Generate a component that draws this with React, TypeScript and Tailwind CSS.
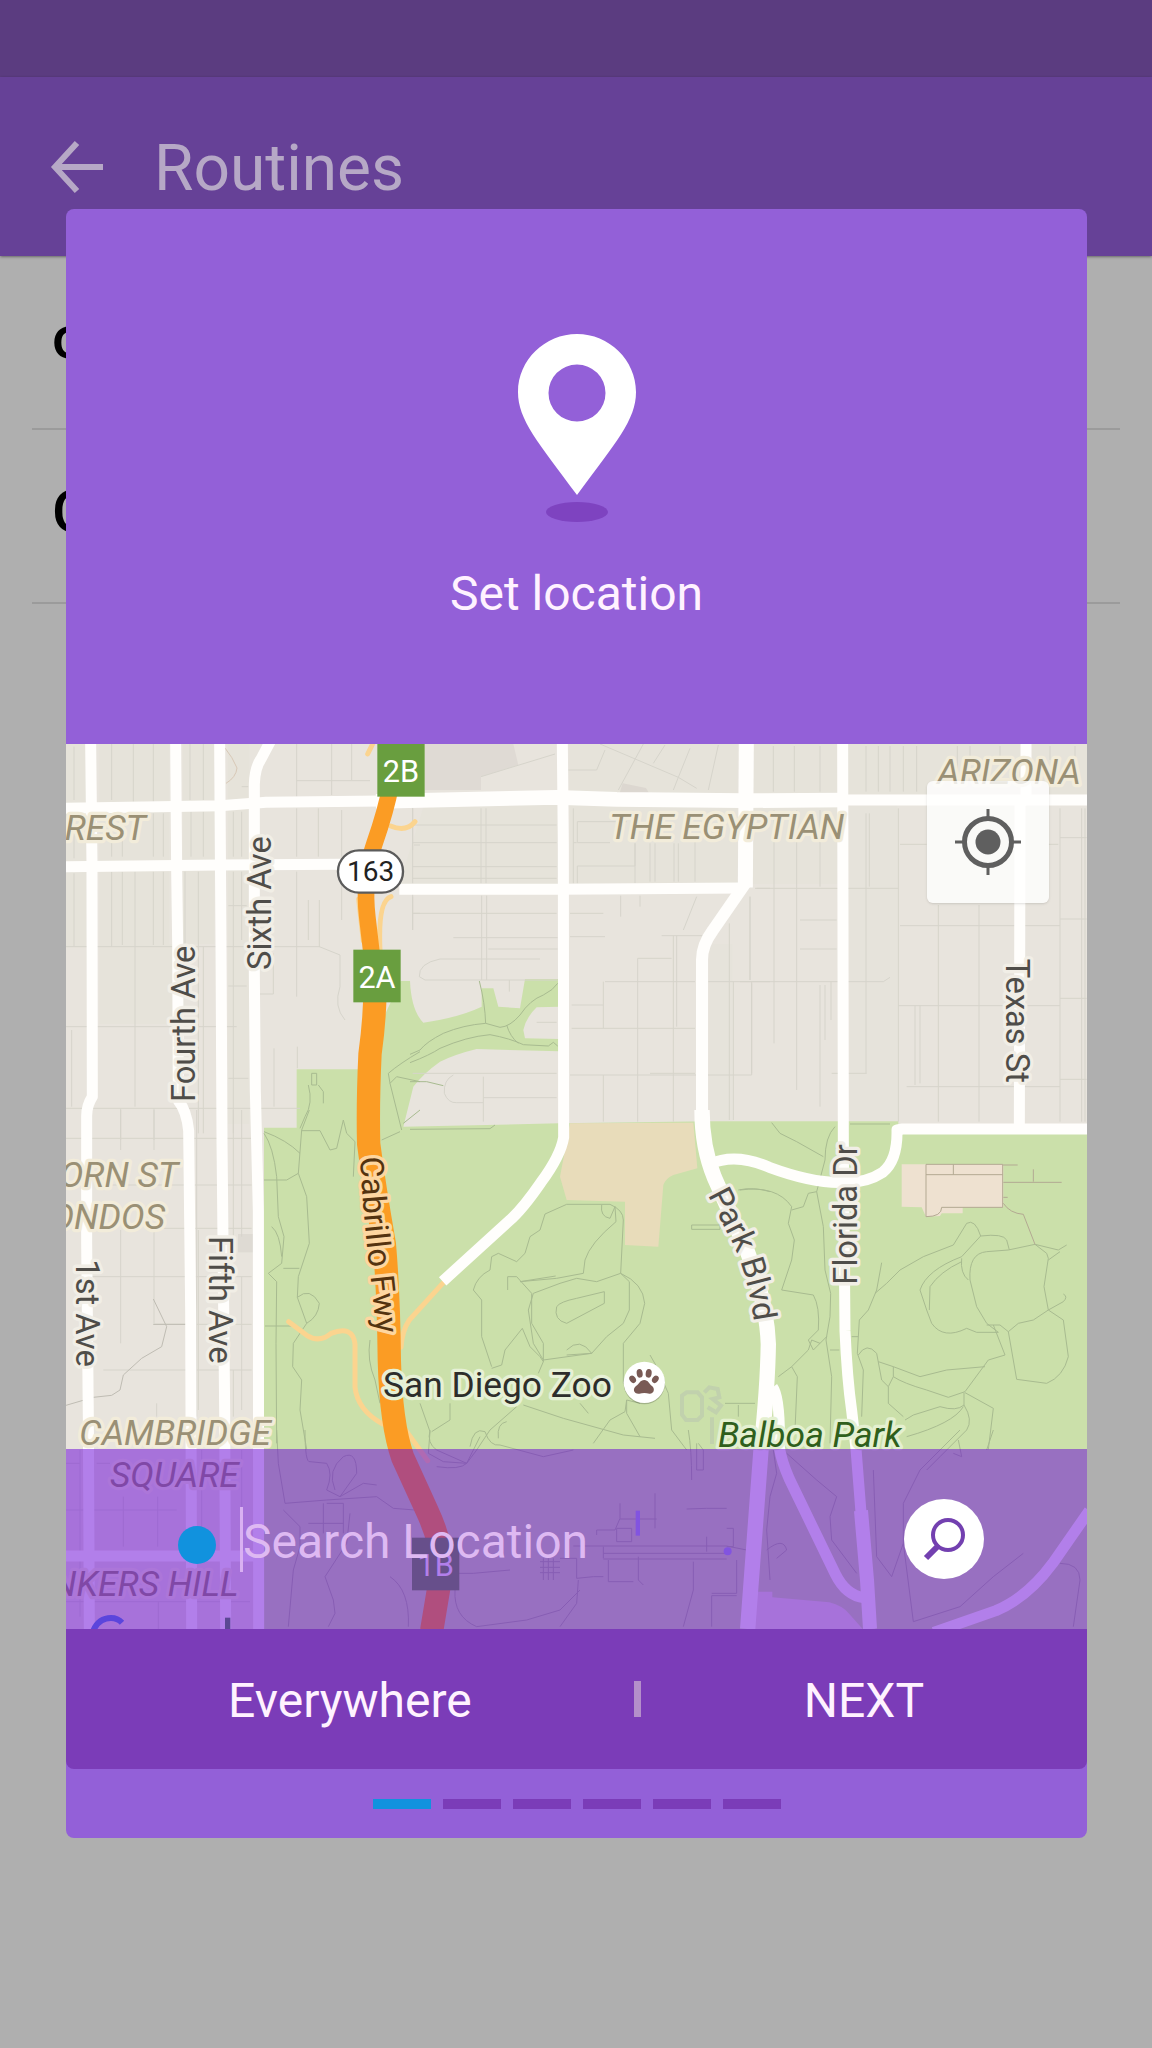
import { useState } from 'react'

const routines = ['o', 'O']
const steps = ['Location', 'Time', 'Days', 'Wi-Fi', 'Actions', 'Summary']

const roadLabel = 'fill-[#4f4d49] stroke-[#f1eee6] text-[98px]'
const areaLabel = 'fill-[#9a9075] stroke-[#f2ecda] text-[106px] italic'

function ExitSign({ x, y, label }: { x: number; y: number; label: string }) {
  return (
    <g>
      <rect x={x} y={y} width={142} height={158} fill="#699e3f" />
      <text x={x + 71} y={y + 115} textAnchor="middle" className="fill-white text-[92px]">
        {label}
      </text>
    </g>
  )
}

function BaseLayer() {
  return (
    <g>
      <rect width={3063} height={2655} fill="#e8e4dd" />
      <g fill="#e6e3da">
        <path d="M0 0H60V610H0zM100 0H310V600H355V840H100zM350 0H445V600H350zM485 0H550V1140H485z" />
        <path d="M1075 180H1475V420H1000zM1510 180H2015V420H1510zM2060 0H2315V420H2060zM1510 0H2015V150H1510zM2345 0H3063V150H2345z" />
        <path d="M1930 600H2000V1130H1930zM2350 180H2495V1130H2350z" opacity="0.7" />
      </g>
      <path d="M1077 0H1342L1357 63 1245 98V138H1077z" fill="#dfdad4" />
      <path d="M1660 150L1670 118 1740 132 1752 152z" fill="#dcd7d0" />
      <path
        d="M594 1151H692V976H880L1004 711H1032Q1036 800 1072 836 1180 820 1247 788V733H1282L1297 788 1362 793 1377 705H1480V788L1412 790Q1380 820 1372 858L1377 883 1480 885V922L1232 915Q1170 930 1122 953 1070 990 1042 1028L1012 1148 1480 1138 1930 1132H2497V1150H3063V2655H594z"
        fill="#cbe0aa"
      />
      <path
        d="M1512 1138L1882 1136 1894 1273 1822 1293Q1800 1302 1792 1323L1777 1508 1677 1503V1373L1502 1368 1482 1298z"
        fill="#e8dcba"
      />
      <path
        d="M2507 1261H2812V1390H2690V1408H2627L2622 1416 2580 1418 2567 1390 2507 1388z"
        fill="#eee1d0"
      />
      <path d="M2070 2543H2119V2560L2290 2575Q2330 2585 2350 2610L2390 2655H2062z" fill="#e8e4dc" />
      <path d="M516 1470H572V1525H516z" fill="#dedad3" />
    </g>
  )
}

function MinorStreets() {
  return (
    <g fill="none" stroke="#d6d4cb" strokeWidth={3}>
      <g transform="translate(-18 -12)">
        <path d="M42 20V180M155 12V180M220 12V185M280 12V185M390 12V180M430 12V180M710 12V170M815 12V165M875 12V120M710 122H930M545 140H565" />
        <path d="M42 225V355M155 225V350M187 220V350M280 220V350M310 220V350M393 215V350M430 215V350M520 215V350M545 215V350M710 205V350M775 205V350M845 210V350" />
        <path d="M42 400V620M155 395V620M187 395V615M225 395V1100M280 395V615M310 395V615M375 395V620M415 395V1180M520 395V1180M545 395V600" />
        <path d="M18 620H780M18 860H530M18 1105H720M505 497H560M505 738H560M505 1015H565M600 762H640V640M710 395V770M778 480V620L840 645V740Q820 800 855 840M745 480V600M845 400V540M642 925V1100M712 920V985" />
        <path d="M182 1105V1200M282 1105V1200M35 870V1100M430 620V1180M1058 520H1080M1058 460V570M1058 205V330M1062 315H1080" />
      </g>
      <path d="M477 12Q500 40 513 72 510 100 480 118" stroke="#d8c8b6" />
      <g transform="translate(1032 -12)">
        <path d="M8 200V430M213 205V430M228 205V430M8 255H440M8 308H440M8 380H440M8 415H440M8 470V570M215 467V720M230 467V720M8 520H440M130 593H443M235 627H443M390 657H90Q25 670 28 710L45 720H443" />
        <path d="M213 110L435 42M475 90H560L585 30M570 12L805 112 860 145M805 112L840 25M790 150L805 112M765 15L730 70M700 12L625 150M895 150L925 15" />
        <path d="M490 205V430M502 245H650M502 245V308H600M502 430V378H675V310M735 310V425M720 310V425M792 310V425M805 310V425M855 300V425M675 310V430M490 308H500" />
        <path d="M480 520H580M632 467V530M690 467V500M480 590H585M755 587H878M790 587V1145M800 587V860M683 655H785M683 655V1145M860 470L820 570M580 725V865M585 725H855M485 795H580M485 865H855M480 1005H1025V725M580 1005V1145M720 1000H855" />
        <path d="M895 725H1080M958 550V1140M970 725V1140M1020 470V720M1035 445H1080M298 720V755M380 847H440M8 1000H440M130 1005Q100 1020 103 1060 115 1090 140 1088H220M220 1010V1145M220 1073H440" />
      </g>
      <g transform="translate(2022 -12)">
        <path d="M100 18V155M163 18V155M240 18V155M378 18V155M415 18V155M450 18V155M490 18V155M530 18V155M652 18V100M690 18V60M780 18V60M930 18V60M1005 18V60" />
        <path d="M102 210V910M170 210V1050M240 210V440M240 735V1100M255 735V900M273 725V840M378 220V1000M388 220V440M475 205V1145M480 313H560M180 540H290M180 627H290M50 445H475" />
        <path d="M30 470V720M0 725H430L450 712M480 557H960M475 797H960M500 1040H960M595 495V1145M717 495V1145M525 797V1035M540 797V1030M960 205V1145M1025 205V1145M1035 205V1145M960 293H1040M960 537H1040M960 775H1040M960 1018H1040M925 313H955M35 730V1000M275 1000H380" />
      </g>
      <g transform="translate(-18 1098)">
        <path d="M182 0V120M182 360V700M282 0V120M282 360V640M18 85H575M120 225H575M300 355H575M60 500H575M280 643H575M130 780H575M410 0V920M415 360V900M520 0V380M520 780V920M545 0V380M545 500V900M290 880V920" />
        <path d="M280 567L320 650 305 710 245 745 190 795 180 840 155 856 100 862 18 886M280 643H380" stroke="#bfbcb3" />
      </g>
      <g transform="translate(-18 2058)">
        <path d="M18 100H60M110 100H150M18 240H350M190 200V350M293 200V350M295 515V597M18 515H570M60 60V560M425 60V380M545 60V360" />
      </g>
    </g>
  )
}

function ParkTrails() {
  return (
    <g fill="none" stroke="#a8bb90" strokeWidth={3} strokeLinejoin="round">
      <g transform="translate(-18 -12)">
        <path d="M755 1000H770V1035H755zM775 1035L790 1055V1090M745 1035Q760 1090 735 1130L720 1165M1080 935Q1020 970 985 1000L990 1030 1010 1010 1080 1025M990 1030L1025 1170" />
      </g>
      <g transform="translate(1032 -12)">
        <path d="M208 723Q225 790 227 850 160 855 100 880 50 905 30 930L0 943M227 850L270 862Q300 860 330 825 360 780 400 765 430 750 443 730M290 855Q300 890 325 910M0 968Q60 945 90 925 170 890 240 884 300 895 340 914L415 918 430 907 443 918M0 1025L50 1025 100 1037M0 1168L240 1166 255 1155" />
      </g>
      <g transform="translate(-18 1098)">
        <path d="M748 0L725 60 715 190 740 260 748 400 715 500 712 562 740 640 700 700 698 770 725 810 720 900 740 1018M612 70Q640 110 650 200L655 320 672 380 665 460 625 490 650 515 648 700 650 1000M612 210H680L715 190M612 65Q680 90 720 130M725 62H780L810 120 830 115 850 30 860 70 885 95 880 200M635 350Q660 370 665 440M670 475H718M712 562Q750 530 778 580 775 620 740 640M615 648H700M965 90L1020 65M930 690Q920 750 945 810L960 880M1030 40L1080 0" />
      </g>
      <g transform="translate(1032 1098)">
        <path d="M245 770L215 680V570L190 540Q200 500 240 480L245 440 265 430 320 455 345 430 360 380 390 360 405 312 470 283H600Q640 300 640 330L632 490 560 515 500 505 450 520 370 550 355 600 370 700 400 750 545 730 590 680 640 640 658 600V515L632 490M575 285Q570 320 600 325L615 290 618 335Q540 400 525 450L520 490 440 505 330 515 437 498M293 540V500H320L365 550V640L400 700V755M440 590Q430 630 470 640L583 580V545L500 565Q450 575 440 590M470 720Q510 680 545 730L470 735M632 490Q700 520 704 580L690 640 640 700V820" />
        <path d="M245 775L275 765 285 720 337 655 360 710 390 740 400 755 385 790M340 885L460 925 640 975 735 985M30 880L60 965 55 1030 100 1055 170 1060 200 1020 240 960 320 890M65 965L120 930V880M180 1010Q190 950 225 965 240 1010 270 1005L400 1040 490 1020M265 985Q260 940 290 935M510 880L535 910M550 1000L600 930 645 905 650 870 690 880M650 870V910L690 980M720 735L740 770 775 850 785 960 830 1020M945 880H1035M985 885V920M845 345H930V358H845zM985 240Q1030 230 1080 245" />
      </g>
      <g transform="translate(2022 1098)">
        <path d="M95 38L120 70 170 95 250 140M285 50Q255 80 255 150L230 245 205 250 190 290 155 300M0 240Q110 225 155 290L145 340 163 390 155 450 125 540 220 555Q240 590 235 660L205 690 220 720 260 680M230 245L250 350 255 480 272 550 270 620 258 690 275 800 270 1000M240 700L215 690 205 720 155 770 115 800M155 770L172 800 165 960M335 680H355M270 720H298M330 42H450" />
        <path d="M425 458L410 540 385 600 358 630 352 730 370 780 365 920M405 550L440 520 480 480 550 440 640 405 680 340Q705 325 722 378L665 440Q560 480 540 540L560 600 575 640Q610 690 680 655L710 667H775L740 640 710 590 690 510Q685 430 740 425L805 420 885 403 920 430 925 445 912 530 925 600 880 630 835 640 805 665 780 645H740M722 378Q790 370 800 390L808 420M665 445Q660 490 685 510M665 455Q600 485 570 530L568 600M885 403L955 420 980 405M925 450L960 425M925 600L970 630 985 740Q970 800 920 820L830 808 805 665M925 600L970 575Q985 560 970 552M760 645L795 735 745 750 675 845 625 862 560 840Q490 820 460 800L460 770 415 755M460 770L540 800 620 780 735 770M675 848L760 895 745 1018M672 848V885Q650 905 600 890L520 915 495 930M672 885Q700 930 680 960L600 1040 560 1080M670 890Q640 940 500 980M355 735Q380 695 410 730L425 810 445 830V880L490 920M445 830L460 800M655 990L665 1040 640 1030" />
        <path d="M558 163H788V292H605Q605 320 558 320zM558 194H788M640 163V194M788 165H833M790 217H965M880 178V215M790 262H803M790 280Q810 310 850 313L885 403" stroke="#b3a992" />
      </g>
      <g transform="translate(-18 2058)">
        <path d="M650 0L655 100 675 220 800 210 950 200 1000 235 1065 240M735 0Q735 100 750 95L800 100Q820 130 800 180L840 200 890 130Q890 60 850 80 800 120 825 180M840 200L910 160 950 165M790 220V310M800 220H850V310M670 240L720 290 720 350 700 420 685 590M870 250L860 340 795 440 820 510 825 550 805 590M745 280H850M1110 0Q1100 40 1130 60L1220 100 1260 20M1130 110Q1200 120 1220 100M1180 430H1240L1350 420M1440 395H1500M1440 412H1500M1440 428H1500M1450 385V450M1465 385V450M1480 385V450M1185 480Q1180 560 1250 590L1400 570 1500 540 1560 480M990 440Q1050 480 1045 590" />
      </g>
      <g transform="translate(1482 2058)">
        <path d="M130 440H100L50 445V385L0 385M40 348H500L560 360M130 370H500M130 387H500M130 350V385M180 220V265L165 300H110V315M170 295H215V335H170zM285 190V295M180 267H290M235 380V450L250 465M145 390V455H220M400 395V480L370 590M530 390V490H455M455 497H530M455 497V590M380 237L440 235H500M500 295H520V350H500M440 320V365M0 590L50 520 55 450M385 0Q395 60 395 150M410 40V120H430V60L415 40" />
        <path d="M640 60L650 130 630 200 620 300 630 450M680 70L770 150 830 200 810 260 815 330 890 430M940 120L950 380 995 440 1030 340V220L1080 120 1200 0M1030 340L1060 575 1200 530 1300 440 1390 370M1280 60L1300 0M1500 400Q1560 400 1560 450L1540 590M620 360Q670 320 680 360L650 385" />
      </g>
    </g>
  )
}

function Roads() {
  return (
    <g fill="none" strokeLinejoin="round">
      <g stroke="#fbd48f" strokeWidth={15} strokeLinecap="round">
        <path d="M668 1733L722 1774Q760 1798 795 1768 860 1742 867 1800V1930Q875 2000 950 2040" />
        <path d="M1130 1618L1030 1728Q1008 1760 1005 1810M1047 233Q1020 266 974 246M975 458Q935 470 942 620M878 465L892 590M1020 2060L1085 2150M920 0L905 30" />
      </g>
      <g stroke="#fffefc" strokeWidth={33}>
        <path d="M74 0L78 360 79 1058Q62 1085 62 1115V1500L67 2020 70 2655" />
        <path d="M329 0L332 380 335 600 337 1070Q362 1100 368 1160L374 1700 377 2655" />
        <path d="M461 0L465 600 468 1188 476 2000 479 2655" />
        <path d="M614 -10L585 45Q567 70 565 120V690L568 1040 577 1400 578 2655" />
        <path d="M0 193L462 185 600 175 950 171M0 368L462 363 830 361M1000 436H1475L1712 434 2032 432M2330 168H3063M0 2436H578" />
        <path d="M1489 0L1492 300 1493 1180Q1484 1235 1425 1315 1370 1395 1330 1430L1130 1612" />
        <path d="M2330 0L2332 1188 2337 1760Q2343 1900 2357 2000L2370 2115 2401 2508 2412 2655" />
        <path d="M1930 1260Q2010 1225 2110 1270 2240 1318 2330 1315 2400 1318 2450 1285 2495 1250 2493 1158L2510 1155H3063" />
        <path d="M2880 0V160L2862 180 2860 1160" />
        <path d="M2120 1930Q2143 1960 2140 2110 2146 2150 2170 2205L2308 2490Q2340 2555 2395 2561" />
        <path d="M3070 2300L2960 2458Q2885 2560 2790 2600L2603 2665" />
      </g>
      <g stroke="#fffefc">
        <path d="M930 172L1472 160 1652 166 2032 170 2340 168" strokeWidth={44} />
        <path d="M2041 0L2038 430" strokeWidth={45} />
        <path d="M2038 418L1940 560Q1907 605 1908 650V1110" strokeWidth={36} />
        <path
          d="M1908 1098Q1908 1210 1945 1300L2045 1525Q2103 1680 2107 1800 2105 1930 2085 2118L2045 2655"
          strokeWidth={46}
        />
        <path d="M2385 2300L2403 2508 2412 2655" strokeWidth={42} />
      </g>
      <g stroke="#fb9c24">
        <path d="M975 120Q960 200 925 300 890 400 904 520L918 640" strokeWidth={50} />
        <path
          d="M926 700Q930 800 912 930 905 1080 908 1200 925 1330 955 1500 968 1650 970 1850 975 2040 1010 2140L1082 2298Q1130 2400 1127 2480L1097 2660"
          strokeWidth={70}
        />
      </g>
    </g>
  )
}

function MapLabels() {
  return (
    <g strokeWidth={20} strokeLinejoin="round" className="[paint-order:stroke]">
      <g className={areaLabel}>
        <text x={-4} y={287}>REST</text>
        <text x={1630} y={285}>THE EGYPTIAN</text>
        <text x={2614} y={121}>ARIZONA</text>
        <text x={337} y={1330} textAnchor="end">ORN ST</text>
        <text x={297} y={1455} textAnchor="end">ONDOS</text>
        <text x={40} y={2103}>CAMBRIDGE</text>
        <text x={132} y={2228}>SQUARE</text>
        <text x={517} y={2557} textAnchor="end">NKERS HILL</text>
      </g>
      <text x={1956} y={2110} className="fill-[#2f5f1c] stroke-[#e4f0d0] text-[106px] italic">
        Balboa Park
      </text>
      <text x={951} y={1958} className="fill-[#2d2d2b] stroke-[#e6f0d6] text-[106px]">
        San Diego Zoo
      </text>
      <g className={roadLabel}>
        <text transform="translate(387 1074) rotate(-90)">Fourth Ave</text>
        <text transform="translate(615 678) rotate(-90)">Sixth Ave</text>
        <text transform="translate(30 1546) rotate(90)">1st Ave</text>
        <text transform="translate(430 1476) rotate(90)">Fifth Ave</text>
        <text transform="translate(2819 644) rotate(90)">Texas St</text>
        <text transform="translate(2374 1622) rotate(-90)">Florida Dr</text>
        <text>
          <textPath href="#park-blvd">Park Blvd</textPath>
        </text>
        <text className="fill-[#54330f] stroke-[#fdd6a0]">
          <textPath href="#cabrillo-fwy">Cabrillo Fwy</textPath>
        </text>
      </g>
    </g>
  )
}

function LocationMap() {
  return (
    <svg
      viewBox="0 0 3063 2655"
      role="img"
      aria-label="Map of San Diego around Balboa Park"
      className="block h-auto w-full"
    >
      <defs>
        <path id="park-blvd" d="M1925 1352L2003 1505Q2046 1600 2064 1730" />
        <path id="cabrillo-fwy" d="M882 1240Q892 1420 909 1560 926 1700 934 1830" />
      </defs>
      <BaseLayer />
      <MinorStreets />
      <ParkTrails />
      <Roads />
      <MapLabels />

      <ExitSign x={934} y={0} label="2B" />
      <ExitSign x={862} y={617} label="2A" />
      <ExitSign x={1038} y={2381} label="1B" />
      <rect x={816} y={319} width={195} height={127} rx={63} fill="#fff" stroke="#5b5b5b" strokeWidth={7} />
      <text x={914} y={412} textAnchor="middle" className="fill-[#222] text-[84px]">
        163
      </text>

      {/* Zoo marker */}
      <circle cx={1735} cy={1919} r={62} fill="#000" opacity={0.2} />
      <circle cx={1735} cy={1915} r={62} fill="#fff" />
      <g fill="#795a55">
        <ellipse cx={1700} cy={1906} rx={9} ry={12} transform="rotate(-35 1700 1906)" />
        <ellipse cx={1721} cy={1888} rx={9} ry={13} transform="rotate(-8 1721 1888)" />
        <ellipse cx={1748} cy={1888} rx={9} ry={13} transform="rotate(8 1748 1888)" />
        <ellipse cx={1768} cy={1906} rx={9} ry={12} transform="rotate(35 1768 1906)" />
        <path d="M1735 1908C1746 1908 1750 1920 1758 1926 1768 1934 1764 1950 1750 1949 1740 1946 1730 1946 1720 1949 1704 1951 1698 1935 1710 1926 1720 1920 1722 1908 1735 1908z" />
      </g>
      <g fill="none" stroke="#bdcbaf" strokeWidth={12} opacity={0.7}>
        <path d="M1848 1955L1862 1945H1895L1908 1960V2015L1895 2028H1860L1848 2012z" />
        <path d="M1915 1945L1930 1930 1955 1935 1960 1960 1940 1965 1965 1985 1950 2005 1925 1990M1938 2020V2100" />
      </g>

      {/* Museums on the prado */}
      <path d="M1709 2300H1722V2375H1709z" fill="#9fa8e8" />
      <circle cx={1985} cy={2422} r={12} fill="#9fa8e8" />

      {/* Attribution logo */}
      <path d="M82 2660Q98 2622 135 2622 155 2622 168 2636" fill="none" stroke="#508ae0" strokeWidth={18} />
      <path d="M477 2621H493V2655H477z" fill="#50904f" />
    </svg>
  )
}

export default function App() {
  const [query, setQuery] = useState('')

  return (
    <div
      className="relative min-h-screen bg-[#afafaf] text-black"
      style={{ fontFamily: 'Roboto, "Liberation Sans", sans-serif' }}
    >
      <div className="h-[77px] bg-[#5b3c80]" />
      <header className="flex h-[179px] items-center gap-12 bg-[#664197] pl-[50px] shadow-sm shadow-black/30">
        <button type="button" aria-label="Back" className="text-[#b6a8c6]">
          <svg viewBox="0 0 56 56" className="size-[56px]" fill="none" stroke="currentColor" strokeWidth={6}>
            <path d="M27 4L5 28 27 52M5 28H53" />
          </svg>
        </button>
        <h1 className="pt-1 text-[64px] leading-none text-[#b6a8c6]">Routines</h1>
      </header>

      <ul className="px-8">
        {routines.map((name) => (
          <li key={name} className="h-[174px] border-b-2 border-[#9b9b9b] pl-5 pt-[52px] text-[60px] font-medium leading-none">
            {name}
          </li>
        ))}
      </ul>

      {/* Dialog sits over the dimmed routine list */}
      <div className="absolute inset-0 pl-[66px] pr-[65px] pt-[209px]">
        <section
          role="dialog"
          aria-label="Set location"
          className="overflow-hidden rounded-lg bg-[#9360d8] text-[#fff2ff]"
        >
          <div className="flex flex-col items-center gap-12 pb-[126px] pt-[125px]">
            <svg viewBox="0 0 118 188" className="h-[188px] w-[118px]">
              <path
                fillRule="evenodd"
                fill="#fff"
                d="M59 0C91 0 118 26 118 58 118 86 98 108 59 161 20 108 0 86 0 58 0 26 27 0 59 0zM59 30.500a28.500 28.500 0 1 0 0 57 28.500 28.500 0 1 0 0-57z"
              />
              <ellipse cx={59} cy={178} rx={31} ry={10} fill="#7e43c0" />
            </svg>
            <h2 className="text-5xl leading-none">Set location</h2>
          </div>

          <div className="relative">
            <LocationMap />

            <button
              type="button"
              aria-label="My location"
              className="absolute right-[38px] top-[37px] flex size-[122px] items-center justify-center rounded-md bg-white/80 shadow"
            >
              <svg viewBox="0 0 68 68" className="size-[68px]" fill="none" stroke="#5f5f5f">
                <circle cx={34} cy={34} r={23.500} strokeWidth={5} />
                <circle cx={34} cy={34} r={12.500} fill="#5f5f5f" stroke="none" />
                <path d="M34 1V11M34 57V67M1 34H11M57 34H67" strokeWidth={3} />
              </svg>
            </button>

            <form
              onSubmit={(e) => e.preventDefault()}
              className="absolute inset-x-0 bottom-0 flex h-[180px] items-center gap-6 bg-[#6600d8]/50 pl-28 pr-[103px]"
            >
              <span className="mt-3 size-[38px] shrink-0 rounded-full bg-[#1192de]" />
              <input
                type="text"
                aria-label="Search Location"
                placeholder="Search Location"
                value={query}
                onChange={(e) => setQuery(e.target.value)}
                className="h-[65px] min-w-0 flex-1 border-l-[3px] border-[#d9b0f2] bg-transparent pt-1 text-5xl text-white outline-none placeholder:text-[#deb9f2]"
              />
              <button
                type="submit"
                aria-label="Search"
                className="flex size-20 shrink-0 items-center justify-center rounded-full bg-white"
              >
                <svg viewBox="0 0 44 44" className="size-[44px]" fill="none" stroke="#7340b0">
                  <circle cx={26} cy={18} r={15} strokeWidth={4} />
                  <path d="M17 28L4 41" strokeWidth={6} />
                </svg>
              </button>
            </form>
          </div>

          <div className="grid h-[140px] grid-cols-[14fr_7px_11fr] items-center rounded-b-lg bg-[#7b3cb8] text-5xl">
            <button type="button" className="h-full pt-1">Everywhere</button>
            <span className="h-9 bg-[#b48fca]" />
            <button type="button" className="h-full pt-1">NEXT</button>
          </div>

          <ol className="flex h-[69px] items-center justify-center gap-3">
            {steps.map((step, i) => (
              <li
                key={step}
                aria-label={step}
                className={i === 0 ? 'h-2.5 w-[58px] bg-[#1192de]' : 'h-2.5 w-[58px] bg-[#7b3cb8]'}
              />
            ))}
          </ol>
        </section>
      </div>
    </div>
  )
}
